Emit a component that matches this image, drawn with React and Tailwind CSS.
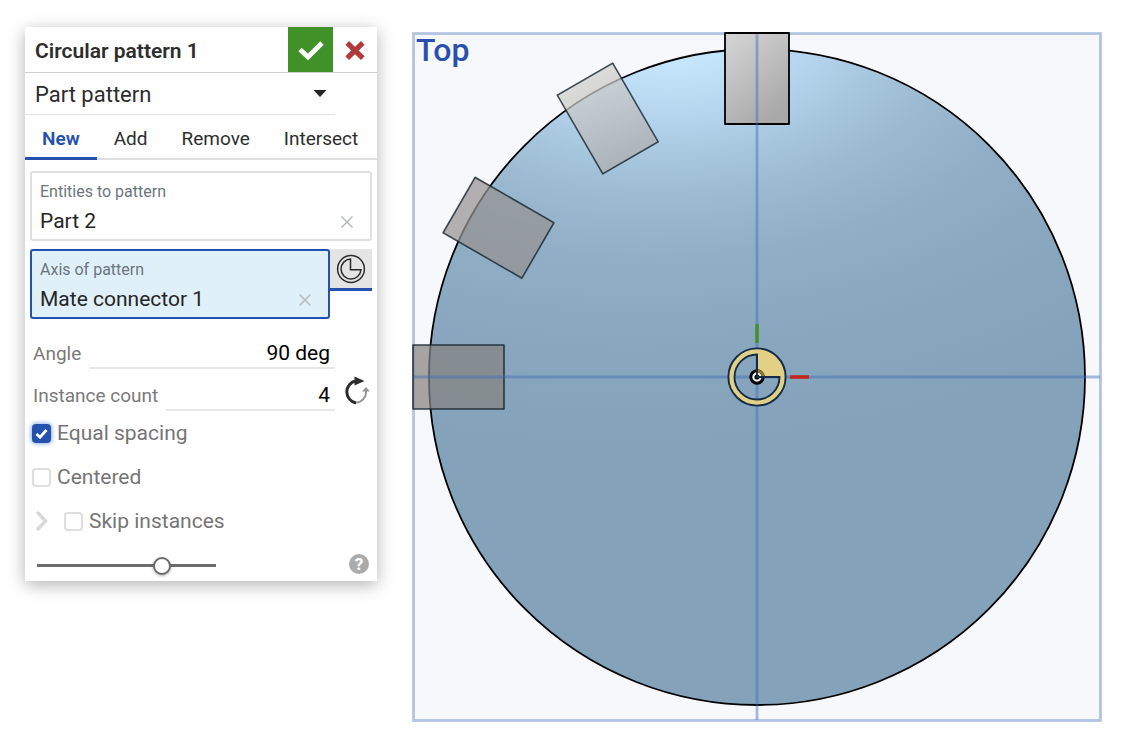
import { useState } from "react";

const TABS = ["New", "Add", "Remove", "Intersect"];

function MateIcon() {
    return (
        <svg viewBox="0 0 30 30" className="h-[30px] w-[30px]" fill="none" stroke="#2d2d2d">
            <circle cx="15" cy="15" r="13.4" strokeWidth="1.5" />
            <path d="M14.5 5A10 10 0 1 0 25 15.8H14.5Z" strokeWidth="1.5" />
        </svg>
    );
}

function FlipIcon() {
    return (
        <svg viewBox="0 0 28 30" className="h-[30px] w-7" fill="none">
            <path d="M14 27A11.3 11.3 0 0 1 14 4.8" stroke="#2d2d2d" strokeWidth="3" />
            <path d="M12.5 0.5L22.5 5L12.5 9.6Z" fill="#2d2d2d" />
            <path d="M14 26.6A10.6 10.6 0 0 0 24 15" stroke="#949494" strokeWidth="1.8" />
            <path d="M20.2 15.6L24 11L27.8 15.6Z" fill="#949494" />
        </svg>
    );
}

function ClearButton({ label }) {
    return (
        <button type="button" aria-label={label} className="flex h-5 w-5 items-center justify-center">
            <svg viewBox="0 0 12 12" className="h-3 w-3" stroke="#b4b9bc" strokeWidth="1.5">
                <path d="M0.5 0.5L11.5 11.5M11.5 0.5L0.5 11.5" />
            </svg>
        </button>
    );
}

function SelectionBox({ id, label, value, active }) {
    return (
        <div
            className={
                active
                    ? "h-[70px] min-w-0 flex-1 rounded-[3px] border-2 border-[#2450ae] bg-[#dff0f9] px-2 pt-[9px]"
                    : "h-[70px] min-w-0 flex-1 rounded-[3px] border-2 border-[#e0e0e0] bg-white px-2 pt-[9px]"
            }
        >
            <label htmlFor={id} className="block text-base leading-5 text-[#6b757b]">
                {label}
            </label>
            <div className="flex h-10 items-center pr-1.5">
                <input
                    id={id}
                    readOnly
                    value={value}
                    className="w-full min-w-0 bg-transparent text-[21px] text-[#252525] outline-none"
                />
                <ClearButton label={`Clear ${value}`} />
            </div>
        </div>
    );
}

function NumberField({ id, label, value, onChange }) {
    return (
        <div className="flex h-[42px] items-end gap-2 pl-2">
            <label htmlFor={id} className="h-8 text-[19px] leading-[34px] text-[#7a7a7a]">
                {label}
            </label>
            <input
                id={id}
                value={value}
                onChange={(e) => onChange(e.target.value)}
                className="h-8 w-0 flex-1 border-b-2 border-[#e8e8e8] bg-transparent pt-0.5 pr-[5px] text-right text-[21px] text-black outline-none"
            />
        </div>
    );
}

function CheckRow({ label, checked, onChange, children }) {
    return (
        <div className="flex h-11 items-center pl-[7px]">
            {children}
            <label className="flex items-center gap-1.5 text-[21px] text-[#757575]">
                <span className="relative flex">
                    <input
                        type="checkbox"
                        checked={checked}
                        onChange={() => onChange(!checked)}
                        className="h-[19px] w-[19px] appearance-none rounded-[4px] border-2 border-[#dedede] bg-white checked:border-[#2450ae] checked:bg-[#2450ae] checked:shadow-[0_0_4px_1px_#8fb0e6]"
                    />
                    {checked && (
                        <svg viewBox="0 0 19 19" className="pointer-events-none absolute inset-0" fill="none">
                            <path d="M4.5 10L8 13.3L14.5 6" stroke="white" strokeWidth="2.8" />
                        </svg>
                    )}
                </span>
                <span className="pt-px">{label}</span>
            </label>
        </div>
    );
}

function PatternDialog() {
    const [type, setType] = useState("Part pattern");
    const [tab, setTab] = useState("New");
    const [angle, setAngle] = useState("90 deg");
    const [count, setCount] = useState("4");
    const [equal, setEqual] = useState(true);
    const [centered, setCentered] = useState(false);
    const [skip, setSkip] = useState(false);
    const [opacity, setOpacity] = useState(72);

    return (
        <form
            onSubmit={(e) => e.preventDefault()}
            className="mt-[27px] w-[352px] shrink-0 bg-white shadow-[0_4px_16px_rgba(0,0,0,0.3)]"
        >
            <div className="flex h-[46px] items-stretch border-b border-[#cfcfcf]">
                <h1 className="flex-1 pl-2.5 text-[21px] leading-[48px] font-semibold text-[#2d2d2d]">Circular pattern 1</h1>
                <button type="submit" aria-label="Accept" className="flex w-[45px] items-center justify-center bg-[#3f9128]">
                    <svg viewBox="0 0 26 20" className="h-5 w-[26px]" fill="none">
                        <path d="M2 9.5L10 17L24 3" stroke="white" strokeWidth="4.8" />
                    </svg>
                </button>
                <button type="button" aria-label="Cancel" className="flex w-[44px] items-center justify-center">
                    <svg viewBox="0 0 20 20" className="h-5 w-5" fill="none">
                        <path d="M2.2 2.8L17.8 18.2M17.8 2.8L2.2 18.2" stroke="#b13a3c" strokeWidth="5.2" />
                    </svg>
                </button>
            </div>

            <div className="relative mr-[42px] border-b border-[#dedede]">
                <select
                    aria-label="Pattern type"
                    value={type}
                    onChange={(e) => setType(e.target.value)}
                    className="block h-[41px] w-full appearance-none bg-transparent pt-0.5 pl-2.5 text-[22px] text-[#2d2d2d] outline-none"
                >
                    <option>Part pattern</option>
                    <option>Feature pattern</option>
                    <option>Face pattern</option>
                </select>
                <svg viewBox="0 0 14 7" className="pointer-events-none absolute top-[17px] right-2 h-[7px] w-3.5">
                    <path d="M0.5 0H13.5L7 7Z" fill="#222" />
                </svg>
            </div>

            <div className="flex h-[45px] border-b-2 border-[#e0e0e0]">
                {TABS.map((name) => (
                    <button
                        key={name}
                        type="button"
                        onClick={() => setTab(name)}
                        className={
                            tab === name
                                ? "-mb-0.5 border-b-3 border-[#2450ae] px-[17px] pt-1.5 text-[19px] font-semibold text-[#2450ae]"
                                : "-mb-0.5 border-b-3 border-transparent px-[17px] pt-1.5 text-[19px] text-[#2d2d2d]"
                        }
                    >
                        {name}
                    </button>
                ))}
            </div>

            <div className="flex flex-col gap-2 px-[5px] pt-[11px]">
                <div className="flex">
                    <SelectionBox id="entities" label="Entities to pattern" value="Part 2" />
                </div>
                <div className="flex items-start">
                    <SelectionBox id="axis" label="Axis of pattern" value="Mate connector 1" active />
                    <button
                        type="button"
                        aria-label="Mate connector"
                        className="flex h-[42px] w-[42px] items-center justify-center border-b-3 border-[#2450ae] bg-[#e4e4e4]"
                    >
                        <MateIcon />
                    </button>
                </div>
            </div>

            <div className="flex items-end pt-2">
                <div className="flex-1">
                    <NumberField id="angle" label="Angle" value={angle} onChange={setAngle} />
                    <NumberField id="count" label="Instance count" value={count} onChange={setCount} />
                </div>
                <button type="button" aria-label="Flip direction" className="flex w-[42px] justify-center pb-[5px]">
                    <FlipIcon />
                </button>
            </div>

            <CheckRow label="Equal spacing" checked={equal} onChange={setEqual} />
            <CheckRow label="Centered" checked={centered} onChange={setCentered} />
            <CheckRow label="Skip instances" checked={skip} onChange={setSkip}>
                <button type="button" aria-label="Expand" className="flex w-8 pl-1">
                    <svg viewBox="0 0 12 20" className="h-5 w-3" fill="none">
                        <path d="M2 2L9.5 10L2 18" stroke="#d8d8d8" strokeWidth="3.4" strokeLinecap="round" />
                    </svg>
                </button>
            </CheckRow>

            <div className="flex h-[38px] items-end justify-between pr-2 pb-[7px] pl-[12px]">
                <input
                    type="range"
                    aria-label="Preview opacity"
                    value={opacity}
                    onChange={(e) => setOpacity(e.target.value)}
                    className="h-[18px] w-[179px] appearance-none bg-transparent [&::-webkit-slider-runnable-track]:h-[3px] [&::-webkit-slider-runnable-track]:bg-[#6c6c6c] [&::-webkit-slider-thumb]:-mt-[7px] [&::-webkit-slider-thumb]:h-[18px] [&::-webkit-slider-thumb]:w-[18px] [&::-webkit-slider-thumb]:appearance-none [&::-webkit-slider-thumb]:rounded-full [&::-webkit-slider-thumb]:border-2 [&::-webkit-slider-thumb]:border-[#6c6c6c] [&::-webkit-slider-thumb]:bg-white [&::-webkit-slider-thumb]:shadow-[0_1px_3px_rgba(0,0,0,0.3)]"
                />
                <button
                    type="button"
                    aria-label="Help"
                    className="flex h-5 w-5 items-center justify-center rounded-full bg-[#ababab] text-[17px] leading-5 font-extrabold text-white"
                >
                    ?
                </button>
            </div>
        </form>
    );
}

// origin of the drawing is the centre of the disc
function Viewport() {
    return (
        <div className="relative mt-[31px] min-w-0 flex-1">
            <svg viewBox="-346 -346 691 691" className="block w-full">
                <defs>
                    <radialGradient
                        id="disc"
                        gradientUnits="userSpaceOnUse"
                        cx="0"
                        cy="0"
                        r="400"
                        gradientTransform="translate(-80 -337) rotate(-4) scale(1.75 1)"
                    >
                        <stop offset="0" stopColor="#c9eaff" />
                        <stop offset="0.08" stopColor="#c2e3fa" />
                        <stop offset="0.2" stopColor="#b3d4ec" />
                        <stop offset="0.3" stopColor="#a6c6de" />
                        <stop offset="0.4" stopColor="#9bbad2" />
                        <stop offset="0.55" stopColor="#90aec5" />
                        <stop offset="0.75" stopColor="#89a7be" />
                        <stop offset="1" stopColor="#84a2ba" />
                    </radialGradient>
                    <linearGradient id="block" x1="0" y1="0" x2="0.6" y2="1">
                        <stop offset="0" stopColor="#d6d6d6" />
                        <stop offset="1" stopColor="#a9a9a9" />
                    </linearGradient>
                    <linearGradient id="ghost" x1="0" y1="0" x2="0" y2="1">
                        <stop offset="0" stopColor="#d0d0cd" />
                        <stop offset="1" stopColor="#afadad" />
                    </linearGradient>
                </defs>

                <rect x="-343.5" y="-343.5" width="687" height="687" fill="#f7f8fb" />
                <circle r="328" fill="url(#disc)" stroke="black" strokeWidth="1.8" />
                <rect x="-343.5" y="-343.5" width="687" height="687" fill="none" stroke="#3d6cb5" strokeOpacity="0.38" strokeWidth="2.8" />

                <g strokeWidth="1.6" strokeLinejoin="round">
                    <rect x="-32" y="-344" width="64" height="91" fill="url(#block)" stroke="black" strokeWidth="1.8" />
                    <g transform="rotate(-30)">
                        <rect x="-32" y="-344" width="64" height="91" fill="url(#ghost)" fillOpacity="0.72" stroke="#15232e" strokeOpacity="0.8" />
                    </g>
                    <g transform="rotate(-60)">
                        <rect x="-32" y="-344" width="64" height="91" fill="#959391" fillOpacity="0.72" stroke="#15232e" strokeOpacity="0.8" />
                    </g>
                    <g transform="rotate(-90)">
                        <rect x="-32" y="-344" width="64" height="91" fill="#858381" fillOpacity="0.72" stroke="#15232e" strokeOpacity="0.85" />
                    </g>
                </g>

                <path d="M0 -343V343M-343 0H343" stroke="#3d6cb5" strokeOpacity="0.45" strokeWidth="2.8" />

                <path d="M0 -53V-34" stroke="#3f9128" strokeWidth="3.4" />
                <path d="M33 0H52" stroke="#c4261d" strokeWidth="3.6" />

                <path
                    d="M-28.6 0A28.6 28.6 0 1 0 28.6 0A28.6 28.6 0 1 0 -28.6 0ZM0 0V-22.5A22.5 22.5 0 1 0 22.5 0Z"
                    fill="#e2d086"
                    fillRule="evenodd"
                    stroke="#142c47"
                    strokeWidth="1.9"
                />
                <circle r="6.2" fill="white" stroke="black" strokeWidth="3" />
                <path d="M0 -6.2A6.2 6.2 0 0 1 6.2 0" stroke="#8d742b" strokeWidth="3" fill="none" />
                <circle r="2.6" fill="black" />
                <path d="M0 -22V0H22" stroke="#142c47" strokeWidth="1.9" fill="none" />
            </svg>
            <span className="absolute top-[3px] left-[5px] text-[32px] leading-8 font-medium text-[#2950ae]">Top</span>
        </div>
    );
}

export default function App() {
    return (
        <main className="flex min-h-screen items-start gap-[34px] bg-white pr-8 pl-[25px] font-['Roboto',sans-serif]">
            <PatternDialog />
            <Viewport />
        </main>
    );
}
